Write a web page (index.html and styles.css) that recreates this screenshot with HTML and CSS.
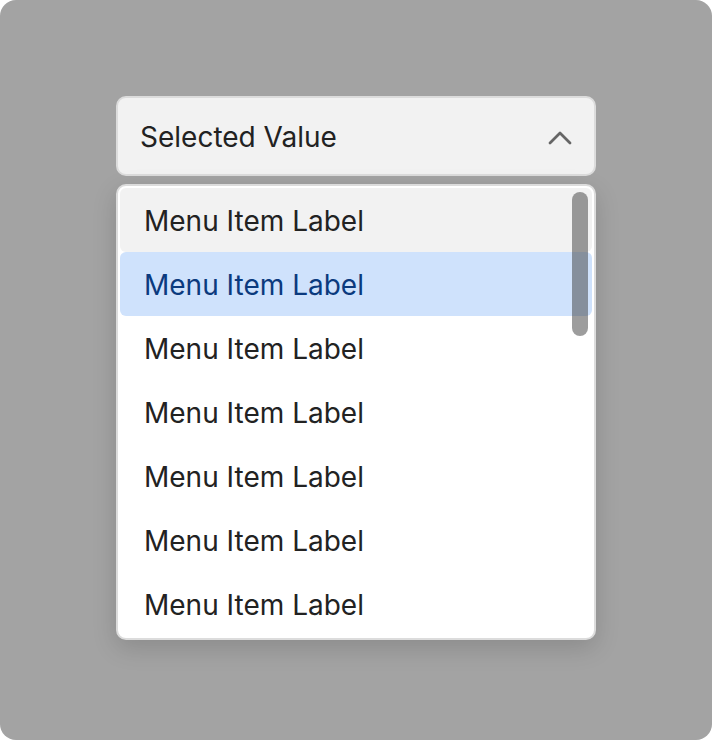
FILE: index.html
```html
<!DOCTYPE html>
<html lang="en">
<head>
    <meta charset="UTF-8">
    <meta name="viewport" content="width=device-width, initial-scale=1.0">
    <title>Dropdown</title>
    <link rel="stylesheet" href="styles.css">
</head>
<body>
    <div class="stage">
        <div class="dropdown">
            <div class="trigger">
                <span class="trigger-value">Selected Value</span>
                <svg class="chevron" width="24" height="24" viewBox="0 0 24 24" fill="none">
                    <path d="M2 18 L12 8 L22 18" stroke="#666666" stroke-width="2.8" stroke-linecap="round" stroke-linejoin="round"/>
                </svg>
            </div>
            <div class="menu">
                <ul class="menu-list">
                    <li class="menu-item hover">Menu Item Label</li>
                    <li class="menu-item selected">Menu Item Label</li>
                    <li class="menu-item">Menu Item Label</li>
                    <li class="menu-item">Menu Item Label</li>
                    <li class="menu-item">Menu Item Label</li>
                    <li class="menu-item">Menu Item Label</li>
                    <li class="menu-item">Menu Item Label</li>
                </ul>
                <div class="scroll-thumb"></div>
            </div>
        </div>
    </div>
</body>
</html>
```

FILE: styles.css
```css
/* page */
body {
    margin: 0;
    background-color: #ffffff;
    font-family: Inter, 'Noto Sans', sans-serif;
}

.stage {
    width: 712px;
    height: 740px;
    box-sizing: border-box;
    padding-top: 96px;
    background-color: #a3a3a3;
    border-radius: 16px;
    display: flex;
    justify-content: center;
    align-items: flex-start;
}

.dropdown {
    width: 480px;
    display: flex;
    flex-direction: column;
    gap: 8px;
}

/* trigger */
.trigger {
    height: 80px;
    box-sizing: border-box;
    padding: 1px 22px 0 22px;
    display: flex;
    align-items: center;
    justify-content: space-between;
    background-color: #f2f2f2;
    border: 2px solid #dcdcdc;
    border-radius: 10px;
}

.trigger-value {
    font-size: 28px;
    color: #222222;
}

/* menu */
.menu {
    position: relative;
    padding: 2px;
    background-color: #ffffff;
    border: 2px solid #dcdcdc;
    border-radius: 10px;
    box-shadow: 0 8px 24px rgba(0, 0, 0, 0.15);
}

.menu-list {
    list-style: none;
    margin: 0;
    padding: 0;
}

.menu-item {
    height: 64px;
    box-sizing: border-box;
    padding: 1px 0 0 24px;
    display: flex;
    align-items: center;
    font-size: 28px;
    color: #222222;
    border-radius: 6px;
}

.menu-item.hover {
    background-color: #f2f2f2;
}

.menu-item.selected {
    background-color: #cfe2fc;
    color: #0b3a7e;
}

.scroll-thumb {
    position: absolute;
    top: 6px;
    right: 6px;
    width: 16px;
    height: 144px;
    border-radius: 8px;
    background-color: rgba(60, 60, 60, 0.5);
}
```
